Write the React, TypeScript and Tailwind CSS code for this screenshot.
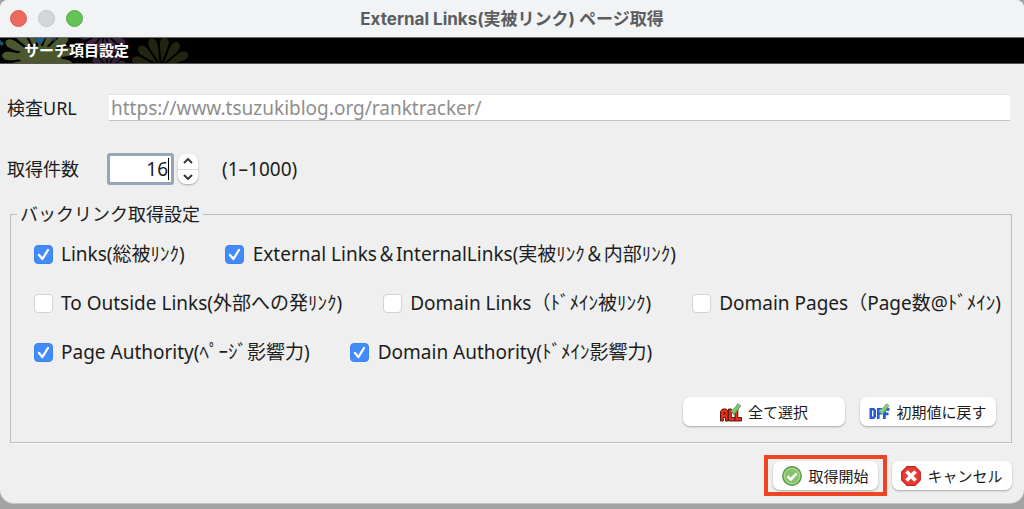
import { useState } from 'react';
import type { ReactNode } from 'react';

type Option = { id: string; label: string; initial: boolean };

const rows: Option[][] = [
  [
    { id: 'links', label: 'Links(総被ﾘﾝｸ)', initial: true },
    { id: 'external', label: 'External Links＆InternalLinks(実被ﾘﾝｸ＆内部ﾘﾝｸ)', initial: true },
  ],
  [
    { id: 'outside', label: 'To Outside Links(外部への発ﾘﾝｸ)', initial: false },
    { id: 'domain-links', label: 'Domain Links（ﾄﾞﾒｲﾝ被ﾘﾝｸ)', initial: false },
    { id: 'domain-pages', label: 'Domain Pages（Page数@ﾄﾞﾒｲﾝ)', initial: false },
  ],
  [
    { id: 'page-authority', label: 'Page Authority(ﾍﾟｰｼﾞ影響力)', initial: true },
    { id: 'domain-authority', label: 'Domain Authority(ﾄﾞﾒｲﾝ影響力)', initial: true },
  ],
];

const allOptions = rows.flat();
const initialState = Object.fromEntries(allOptions.map((o) => [o.id, o.initial]));

function Petals({ x, y, r, w, count, color }: { x: number; y: number; r: number; w: number; count: number; color: string }) {
  return (
    <g transform={`translate(${x} ${y})`} fill={color}>
      {Array.from({ length: count }, (_, i) => (
        <path
          key={i}
          transform={`rotate(${(360 / count) * i + 8})`}
          d={`M0 -3 C-1 ${-r * 0.4} ${-w * 1.4} ${-r * 0.7} ${-w} ${-r * 0.9} Q0 ${-r * 1.1} ${w} ${-r * 0.9} C${w * 1.4} ${-r * 0.7} 1 ${-r * 0.4} 0 -3Z`}
        />
      ))}
    </g>
  );
}

function FlowerArt() {
  return (
    <svg className="absolute inset-y-0 left-0 h-full" width="220" height="25" viewBox="0 0 220 25" aria-hidden="true">
      <Petals x={104} y={-6} r={24} w={3} count={13} color="#3d2340" />
      <Petals x={108} y={30} r={18} w={3} count={11} color="#34203a" />
      <Petals x={38} y={19} r={36} w={4} count={15} color="#4a572f" />
      <ellipse cx="40" cy="18" rx="22" ry="10" fill="#4a572f" />
      <Petals x={161} y={29} r={30} w={4} count={13} color="#22240f" />
      <path d="M36 0h9l-2 4-4 2-4-3z" fill="#1f5a86" />
      <path d="M0 2l4 3-2 3-2-1z" fill="#1c4d70" />
      <circle cx="54" cy="1" r="2" fill="#17425f" />
    </svg>
  );
}

function AllIcon() {
  return (
    <svg width="22" height="20" viewBox="0 0 22 20" aria-hidden="true">
      <path d="M.5 19V9.5L2.5 7H6L8 9V19H5.5V15.5H3.3V19Z" fill="#e5301c" stroke="#5a1a12" strokeWidth="1" />
      <path d="M8.5 7H11.3V15.5H15V19H8.5Z" fill="#e5301c" stroke="#5a1a12" strokeWidth="1" />
      <path d="M15 7H17.8V15.5H21.5V19H15Z" fill="#e5301c" stroke="#5a1a12" strokeWidth="1" />
      <path d="M3.3 10.5H5.5V12.5H3.3Z" fill="#5a1a12" />
      <path d="M12 8 L14 10 L19.5 2.5" fill="none" stroke="#57924f" strokeWidth="4.2" />
      <path d="M12 8 L14 9.6 L19.5 2.5" fill="none" stroke="#83c877" strokeWidth="2.6" />
    </svg>
  );
}

function DefaultIcon() {
  return (
    <svg width="21" height="20" viewBox="0 0 21 20" aria-hidden="true">
      <path d="M.5 6H5L7 8V15L5 17H.5ZM3 8.6V14.4H4.4V8.6Z" fill="#285ad8" fillRule="evenodd" />
      <path d="M8 6H13V8.5H10.6V10.2H12.6V12.6H10.6V17H8ZM14 6H20.5V8.8H16.8V10.6H19.5V13.2H16.8V17H14Z" fill="#285ad8" />
      <path d="M11 8 L13 10 L19 2.5" fill="none" stroke="#6aa96a" strokeWidth="4" />
      <path d="M11 8 L13 9.6 L19 2.5" fill="none" stroke="#8bcf80" strokeWidth="2.4" />
    </svg>
  );
}

function StartIcon() {
  return (
    <svg width="20" height="20" viewBox="0 0 20 20" aria-hidden="true">
      <circle cx="10" cy="10" r="9.3" fill="#86c36c" stroke="#4f9440" strokeWidth="1.2" />
      <circle cx="10" cy="10" r="7.6" fill="none" stroke="#b4dda0" strokeWidth="1" />
      <path d="M5.5 10.3 L8.8 13.4 L14.7 7.3" fill="none" stroke="#fff" strokeWidth="2.6" />
    </svg>
  );
}

function CancelIcon() {
  return (
    <svg width="20" height="20" viewBox="0 0 20 20" aria-hidden="true">
      <path d="M6 .7H14L19.3 6V14L14 19.3H6L.7 14V6Z" fill="#e83a2e" stroke="#c6241d" strokeWidth="1.2" />
      <path d="M5.5 5.5 L14.5 14.5 M14.5 5.5 L5.5 14.5" stroke="#fff" strokeWidth="3.8" />
    </svg>
  );
}

function PushButton({ icon, children, className, onClick }: { icon: ReactNode; children: ReactNode; className: string; onClick?: () => void }) {
  return (
    <button
      type="button"
      onClick={onClick}
      className={`flex h-[29px] items-center justify-center gap-1.5 rounded-[7px] bg-white text-[15px] leading-5 whitespace-nowrap shadow-[0_1px_2px_rgba(0,0,0,0.3)] ${className}`}
    >
      {icon}
      {children}
    </button>
  );
}

export default function App() {
  const [checked, setChecked] = useState<Record<string, boolean>>(initialState);
  const [count, setCount] = useState(16);
  const step = (by: number) => setCount((n) => Math.min(1000, Math.max(1, n + by)));

  return (
    <div className="bg-[#a3a3a3] pb-[5px] font-['Noto_Sans','Noto_Sans_CJK_JP',sans-serif] text-[#1c1c1c]">
      <main className="overflow-hidden rounded-t-[8px] rounded-b-[14px] border-b border-[#c4c4c4] bg-[#efefef]">
        <header className="grid h-[38px] grid-cols-[1fr_auto_1fr] items-center border-b border-[#6d6e6f] bg-[#f1f3f5] px-2.5">
          <div className="flex gap-[11px]">
            <button type="button" aria-label="閉じる" className="size-[17px] rounded-full border border-[#dc5d50] bg-[#ed6a5e]" />
            <button type="button" aria-label="しまう" className="size-[17px] rounded-full border border-[#c2c3c4] bg-[#d5d6d8]" />
            <button type="button" aria-label="拡大" className="size-[17px] rounded-full border border-[#52ae46] bg-[#61c454]" />
          </div>
          <h1 className="font-['Inter','Noto_Sans_CJK_JP',sans-serif] text-[17px] leading-5 font-bold text-[#5a5d5f]">
            External Links(実被リンク) ページ取得
          </h1>
        </header>

        <div className="relative h-[26px] border-b border-[#555] bg-black">
          <FlowerArt />
          <h2 className="relative pl-6 text-[15px] leading-[25px] font-bold text-white">サーチ項目設定</h2>
        </div>

        <form className="px-2.5 pt-[30px] pb-[7px]" onSubmit={(e) => e.preventDefault()}>
          <div className="-ml-[3px] grid grid-cols-[102px_1fr] items-center">
            <label htmlFor="url" className="text-[18px] leading-6">検査URL</label>
            <input
              id="url"
              type="text"
              defaultValue="https://www.tsuzukiblog.org/ranktracker/"
              className="mr-1 h-[27px] border-t border-b border-t-[#e2e2e2] border-b-[#c4c4c4] bg-white px-0.5 text-[19px] leading-6 text-[#8e8e8e] outline-none"
            />
          </div>

          <div className="mt-8 -ml-[3px] grid grid-cols-[100px_auto_auto_1fr] items-center">
            <label htmlFor="count" className="text-[18px] leading-6">取得件数</label>
            <div className="flex h-8 w-[67px] items-center rounded-[3px] border-[3px] border-[#97a5b9] bg-white pr-0.5">
              <input
                id="count"
                type="text"
                inputMode="numeric"
                value={count}
                onChange={(e) => setCount(Number(e.target.value) || 1)}
                className="w-full min-w-0 text-right text-[19px] leading-6 outline-none"
              />
              <span className="h-[22px] w-px bg-black" />
            </div>
            <div className="ml-1 flex h-[30px] w-5 flex-col rounded-[8px] bg-white shadow-[0_1px_2px_rgba(0,0,0,0.3)]">
              <button type="button" aria-label="増やす" onClick={() => step(1)} className="flex flex-1 items-center justify-center border-b border-[#dcdcdc]">
                <svg width="10" height="6" viewBox="0 0 10 6"><path d="M1 5 L5 1 L9 5" fill="none" stroke="#333" strokeWidth="1.9" /></svg>
              </button>
              <button type="button" aria-label="減らす" onClick={() => step(-1)} className="flex flex-1 items-center justify-center">
                <svg width="10" height="6" viewBox="0 0 10 6"><path d="M1 1 L5 5 L9 1" fill="none" stroke="#333" strokeWidth="1.9" /></svg>
              </button>
            </div>
            <span className="ml-6 text-[19px] leading-6">(1–1000)</span>
          </div>

          <fieldset className="mt-[17px] mr-0.5 min-w-0 border border-[#bcbcbc] pr-[15px] pb-4 pl-[22px] shadow-[0_1px_0_#fafafa]">
            <legend className="-ml-4 px-[3px] text-[18px] leading-6">バックリンク取得設定</legend>
            <div className="mt-3.5 flex flex-col gap-[21px]">
              {rows.map((row) => (
                <div key={row[0].id} className="flex gap-10">
                  {row.map((option) => (
                    <label key={option.id} className="flex h-7 items-center gap-2 text-[19px] leading-7 whitespace-nowrap">
                      <span className="grid size-5 place-items-center">
                        <input
                          type="checkbox"
                          checked={checked[option.id]}
                          onChange={(e) => setChecked({ ...checked, [option.id]: e.target.checked })}
                          className="peer col-start-1 row-start-1 size-[19px] appearance-none rounded-[4px] border border-[#d2d2d2] bg-white checked:border-[#3b82f2] checked:bg-[#438bf7]"
                        />
                        <svg className="pointer-events-none col-start-1 row-start-1 hidden peer-checked:block" width="19" height="19" viewBox="0 0 19 19" aria-hidden="true">
                          <path d="M5 10 L8.4 14 L14 5" fill="none" stroke="#fff" strokeWidth="2.3" strokeLinecap="round" strokeLinejoin="round" />
                        </svg>
                      </span>
                      {option.label}
                    </label>
                  ))}
                </div>
              ))}
            </div>
            <div className="mt-[31px] flex justify-end gap-[15px]">
              <PushButton icon={<AllIcon />} className="w-[162px]" onClick={() => setChecked(Object.fromEntries(allOptions.map((o) => [o.id, true])))}>
                全て選択
              </PushButton>
              <PushButton icon={<DefaultIcon />} className="w-[136px]" onClick={() => setChecked(initialState)}>
                初期値に戻す
              </PushButton>
            </div>
          </fieldset>

          <div className="mt-3 mr-0.5 flex items-center justify-end gap-[5px]">
            <div className="border-4 border-[#ee4526] px-[5px] py-0.5">
              <PushButton icon={<StartIcon />} className="w-[105px]">取得開始</PushButton>
            </div>
            <PushButton icon={<CancelIcon />} className="w-[120px]">キャンセル</PushButton>
          </div>
        </form>
      </main>
    </div>
  );
}
